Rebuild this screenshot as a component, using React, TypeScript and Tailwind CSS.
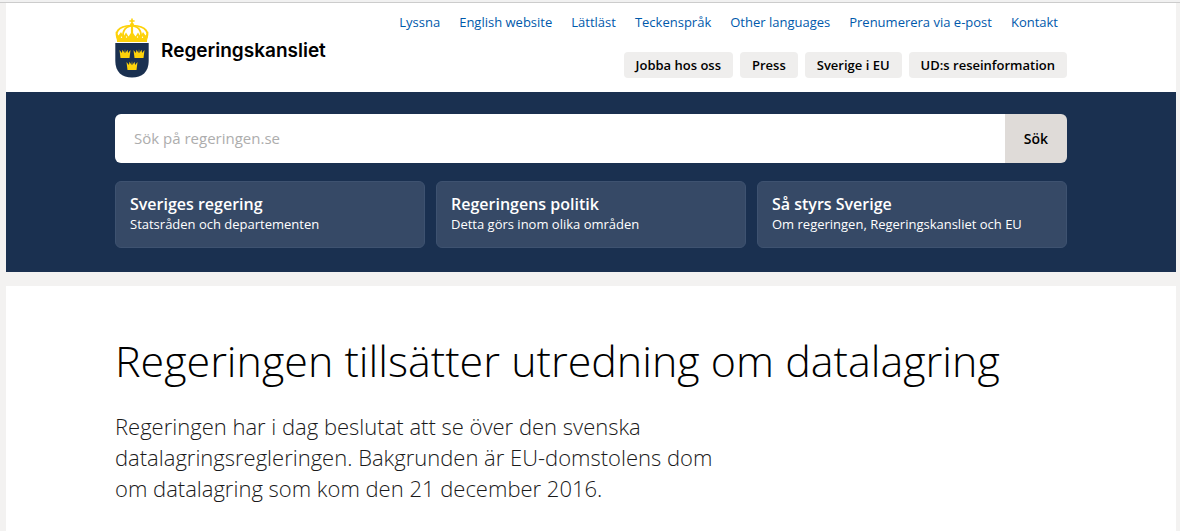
const serviceLinks = [
  'Lyssna',
  'English website',
  'Lättläst',
  'Teckenspråk',
  'Other languages',
  'Prenumerera via e-post',
  'Kontakt',
];

const shortcuts = ['Jobba hos oss', 'Press', 'Sverige i EU', 'UD:s reseinformation'];

const sections = [
  { title: 'Sveriges regering', text: 'Statsråden och departementen' },
  { title: 'Regeringens politik', text: 'Detta görs inom olika områden' },
  { title: 'Så styrs Sverige', text: 'Om regeringen, Regeringskansliet och EU' },
];

const smallCrown = 'M0 1 L2.4 4 L3 0.8 L5 4 L5.5 0 L6 4 L8 0.8 L8.6 4 L11 1 L10 9 H1 Z';

function CoatOfArms() {
  return (
    <svg viewBox="0 0 34 60" className="h-[60px] w-[34px] shrink-0" aria-hidden="true">
      {/* Royal crown */}
      <g fill="#fdd20a">
        <path d="M16.2 0.5h1.6v1.8h1.8v1.5h-1.8v2h-1.6v-2h-1.8V2.3h1.8z" />
        <circle cx="17" cy="6.8" r="2" />
        <path d="M2 21.5 Q17 19.5 32 21.5 V24 H2 Z" />
      </g>
      <g fill="none" stroke="#fdd20a" strokeWidth="1.9">
        <path d="M3.5 22 C-1 15 2.5 8 16 7.6" />
        <path d="M9 21 C6.5 15 9 9 16.5 7.6" />
        <path d="M17 7.5 V21" strokeWidth="2.2" />
        <path d="M25 21 C27.5 15 25 9 17.5 7.6" />
        <path d="M30.5 22 C35 15 31.5 8 18 7.6" />
      </g>
      <path
        d="M0.5 13.5 L3.5 17.5 L6 14 L8.5 18.5 L11 14.5 L13.5 18.5 L17 13.5 L20.5 18.5 L23 14.5 L25.5 18.5 L28 14 L30.5 17.5 L33.5 13.5 L32 23 H2 Z"
        fill="#fdd20a"
      />
      <g fill="#fff">
        <circle cx="6.5" cy="19.3" r="0.7" />
        <circle cx="11.5" cy="19" r="0.7" />
        <circle cx="22.5" cy="19" r="0.7" />
        <circle cx="27.5" cy="19.3" r="0.7" />
      </g>
      {/* Shield */}
      <path d="M0.3 25 H33.7 V43 C33.7 54 27 59.5 17 59.5 C7 59.5 0.3 54 0.3 43 Z" fill="#1a3050" />
      <g fill="#fdd20a">
        <path d={smallCrown} transform="translate(4.5 31)" />
        <path d={smallCrown} transform="translate(18.5 31)" />
        <path d={smallCrown} transform="translate(11.5 43)" />
      </g>
    </svg>
  );
}

export default function App() {
  return (
    <div className="min-h-screen bg-[#f3f2f1] font-['Open_Sans',sans-serif] text-black flex flex-col">
      <div className="h-[3px] border-b border-[#cccccc] bg-[#f1f1f1]" />

      <div className="flex flex-1 flex-col pl-[6px] pr-1">
        <header>
          <div className="bg-white px-6">
            <div className="mx-auto flex h-[89px] max-w-[952px] items-start justify-between">
              <a href="#" className="flex items-center gap-3 pt-[15px]">
                <CoatOfArms />
                <span className="pt-[6px] font-['Inter',sans-serif] text-[19px] font-semibold">Regeringskansliet</span>
              </a>

              <div className="flex flex-col items-end">
                <nav className="flex gap-[19px] pr-[9px] pt-[9px]">
                  {serviceLinks.map((link) => (
                    <a key={link} href="#" className="whitespace-nowrap text-[13px] font-medium leading-5 text-[#0059ab]">
                      {link}
                    </a>
                  ))}
                </nav>
                <nav className="mt-5 flex gap-[7px]">
                  {shortcuts.map((item) => (
                    <a
                      key={item}
                      href="#"
                      className="whitespace-nowrap rounded-[4px] bg-[#efeeed] px-3 py-[3px] text-[13px] font-semibold leading-5"
                    >
                      {item}
                    </a>
                  ))}
                </nav>
              </div>
            </div>
          </div>

          <div className="bg-[#1a3050] px-6 pb-6 pt-[22px]">
            <div className="mx-auto max-w-[952px]">
              <form className="flex h-[49px] overflow-hidden rounded-[6px]" onSubmit={(e) => e.preventDefault()}>
                <input
                  type="search"
                  aria-label="Sök på regeringen.se"
                  placeholder="Sök på regeringen.se"
                  className="min-w-0 flex-1 bg-white px-[19px] text-[15px] outline-none placeholder:text-[#adadad]"
                />
                <button type="submit" className="w-[62px] bg-[#dfdbd8] text-[14px] font-semibold">
                  Sök
                </button>
              </form>

              <nav className="mt-[18px] grid grid-cols-3 gap-[11px]">
                {sections.map((section) => (
                  <a
                    key={section.title}
                    href="#"
                    className="rounded-[6px] border border-[#3e5270] bg-[#364966] px-[14px] pb-[14px] pt-[11px] text-white"
                  >
                    <span className="block text-[16px] font-semibold leading-[22px]">{section.title}</span>
                    <span className="block text-[13px] leading-[18px]">{section.text}</span>
                  </a>
                ))}
              </nav>
            </div>
          </div>
        </header>

        <main className="mt-[14px] flex-1 bg-white px-6">
          <article className="mx-auto max-w-[952px] pt-[45px]">
            <h1 className="text-[43px] font-light leading-[60px]">Regeringen tillsätter utredning om datalagring</h1>
            <p className="mt-5 max-w-[620px] text-[22px] font-light leading-[31px] text-[#1a1a1a]">
              Regeringen har i dag beslutat att se över den svenska datalagringsregleringen. Bakgrunden är EU-domstolens dom
              om datalagring som kom den 21 december 2016.
            </p>
          </article>
        </main>
      </div>
    </div>
  );
}
